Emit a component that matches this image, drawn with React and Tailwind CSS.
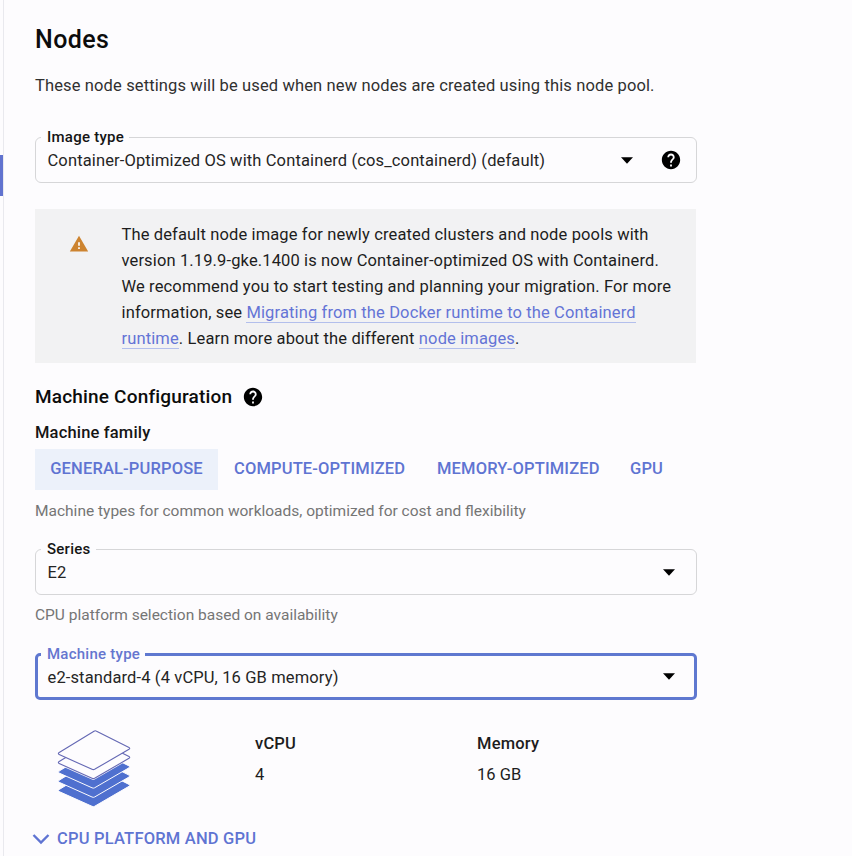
const SLAB =
  "M37 1.200Q38.300 0.400 39.600 1.200L72 17.400Q73.500 18.300 72 19.300L37.600 39.300Q36.300 40 35 39.300L2.200 24.600Q0.500 23.600 2.200 22.500Z";

function Caret() {
  return (
    <svg width="12" height="7" viewBox="0 0 12 7" className="shrink-0">
      <path d="M0 0.300h12L6 6.700z" fill="#000" />
    </svg>
  );
}

function HelpIcon() {
  return (
    <svg width="22" height="22" viewBox="0 0 24 24" className="shrink-0">
      <path
        fill="#000"
        d="M12 2C6.48 2 2 6.48 2 12s4.48 10 10 10 10-4.48 10-10S17.52 2 12 2zm1 17h-2v-2h2v2zm2.070-7.750l-.9.920C13.450 12.900 13 13.500 13 15h-2v-.5c0-1.100.450-2.100 1.170-2.830l1.240-1.260c.370-.360.590-.860.590-1.410 0-1.100-.9-2-2-2s-2 .9-2 2H8c0-2.210 1.790-4 4-4s4 1.790 4 4c0 .880-.360 1.680-.930 2.250z"
      />
    </svg>
  );
}

function Field({ label, value, help, focused }) {
  return (
    <fieldset
      className={
        focused
          ? "h-[55px] w-[662px] rounded-[5px] border-[3px] border-[#5f78d0] pl-[3px]"
          : "h-[55px] w-[662px] rounded-[6px] border border-[#d6d6d8] pl-[5px]"
      }
    >
      <legend
        className={
          focused
            ? "h-[18px] pr-[5px] pl-[6px] text-[15px] leading-[18px] font-medium tracking-[0.25px] text-[#6576cf]"
            : "h-[18px] pr-[5px] pl-[6px] text-[15px] leading-[18px] font-medium tracking-[0.25px] text-[#151515]"
        }
      >
        {label}
      </legend>
      <div
        className={
          focused
            ? "flex h-[27px] items-center pr-[19px] pl-[6.500px]"
            : "flex h-[28px] items-center pr-[21px] pl-[6.500px]"
        }
      >
        <span className="mt-[2px] grow text-[16.5px] leading-5 tracking-[0.13px] text-[#252525]">{value}</span>
        <Caret />
        {help && (
          <span className="-mr-[7px] ml-[27px]">
            <HelpIcon />
          </span>
        )}
      </div>
    </fieldset>
  );
}

function Link({ children }) {
  return <span className="border-b border-[#b3bfec] text-[#6474d6]">{children}</span>;
}

function Layers() {
  return (
    <svg width="75" height="80" viewBox="0 0 75 80" className="shrink-0">
      <g fill="#4f70cf" stroke="#fdfcfe" strokeWidth="1">
        <path d={SLAB} transform="translate(0 37)" />
        <path d={SLAB} transform="translate(0 27.700)" />
        <path d={SLAB} transform="translate(0 18.500)" />
      </g>
      <path d={SLAB} transform="translate(0 10.300)" fill="#fdfcfe" />
      <g fill="#fdfcfe" stroke="#6468b4" strokeWidth="1.100">
        <path d={SLAB} transform="translate(0 9)" />
        <path d={SLAB} />
      </g>
    </svg>
  );
}

export default function App() {
  return (
    <div className="flex h-[856px] w-[852px] overflow-hidden bg-[#fdfcfe] font-[Roboto,sans-serif]">
      <aside className="flex w-[4px] shrink-0 flex-col border-r border-[#e9e9ee] pt-[155px]">
        <div className="h-[41px] w-[3px] bg-[#6173cf]" />
      </aside>
      <main className="flex w-[693px] shrink-0 flex-col pl-[31px]">
        <h1 className="mt-[24px] h-8 text-[25px] leading-8 font-medium tracking-[0.4px] text-[#0c0c0c]">Nodes</h1>
        <p className="mt-[20px] h-5 text-[16.5px] leading-5 tracking-[0.13px] whitespace-nowrap text-[#303030]">
          These node settings will be used when new nodes are created using this node pool.
        </p>
        <div className="mt-[32px]">
          <Field
            label="Image type"
            value="Container-Optimized OS with Containerd (cos_containerd) (default)"
            help
          />
        </div>

        <section className="mt-[26px] flex h-[154px] w-[661px] bg-[#f2f2f3] pt-[13px] pl-[34px]">
          <svg width="20" height="20" viewBox="0 0 24 24" className="mt-[12px] shrink-0">
            <path fill="#fff" d="M9 8h6v11H9z" />
            <path fill="#cd8430" d="M1 21h22L12 2 1 21zm12-3h-2v-2h2v2zm0-4h-2v-4h2v4z" />
          </svg>
          <p className="ml-[32.500px] text-[16.5px] leading-[26px] tracking-[0.13px] whitespace-nowrap text-[#1d1d1d]">
            The default node image for newly created clusters and node pools with
            <br />
            version 1.19.9-gke.1400 is now Container-optimized OS with Containerd.
            <br />
            We recommend you to start testing and planning your migration. For more
            <br />
            information, see <Link>Migrating from the Docker runtime to the Containerd</Link>
            <br />
            <Link>runtime</Link>. Learn more about the different <Link>node images</Link>.
          </p>
        </section>

        <div className="mt-[22px] flex h-6 items-center">
          <h2 className="text-[19px] leading-6 font-medium tracking-[0.18px] text-[#0c0c0c]">Machine Configuration</h2>
          <span className="ml-[9.500px]">
            <HelpIcon />
          </span>
        </div>
        <h3 className="mt-[14px] h-5 text-[16.5px] leading-5 font-medium tracking-[0.17px] text-[#151515]">
          Machine family
        </h3>
        <nav className="mt-[6px] flex h-[41px] items-center text-[16.5px] leading-5 font-medium tracking-[0.15px] whitespace-nowrap text-[#5f74d2]">
          <span className="flex h-full w-[183px] items-center justify-center bg-[#ecf1fa] pb-[1px]">GENERAL-PURPOSE</span>
          <span className="ml-[16px] w-[203px] pb-[1px]">COMPUTE-OPTIMIZED</span>
          <span className="w-[193px] pb-[1px]">MEMORY-OPTIMIZED</span>
          <span className="pb-[1px]">GPU</span>
        </nav>
        <p className="mt-[11px] h-5 text-[15.5px] leading-5 text-[#757575]">
          Machine types for common workloads, optimized for cost and flexibility
        </p>
        <div className="mt-[19px]">
          <Field label="Series" value="E2" />
        </div>
        <p className="mt-[10px] h-5 text-[15.5px] leading-5 text-[#757575]">
          CPU platform selection based on availability
        </p>
        <div className="mt-[20px]">
          <Field label="Machine type" value="e2-standard-4 (4 vCPU, 16 GB memory)" focused />
        </div>

        <section className="mt-[30px] flex h-[80px] pl-[22px]">
          <Layers />
          <dl className="ml-[123px] w-[222px] text-[16.5px] leading-5 text-[#1d1d1d]">
            <dt className="mt-[4px] font-medium tracking-[0.2px]">vCPU</dt>
            <dd className="mt-[11px]">4</dd>
          </dl>
          <dl className="text-[16.5px] leading-5 text-[#1d1d1d]">
            <dt className="mt-[4px] font-medium tracking-[0.2px]">Memory</dt>
            <dd className="mt-[11px]">16 GB</dd>
          </dl>
        </section>

        <div className="mt-[19px] flex h-5 items-center text-[16.5px] leading-5 font-medium tracking-[0.2px] text-[#5f74d2]">
          <svg width="18" height="12" viewBox="0 0 18 12" className="-ml-[3px] shrink-0">
            <path d="M1.500 2L9 9.500 16.500 2" fill="none" stroke="#5f74d2" strokeWidth="2.400" />
          </svg>
          <span className="ml-[7px]">CPU PLATFORM AND GPU</span>
        </div>
      </main>
    </div>
  );
}
